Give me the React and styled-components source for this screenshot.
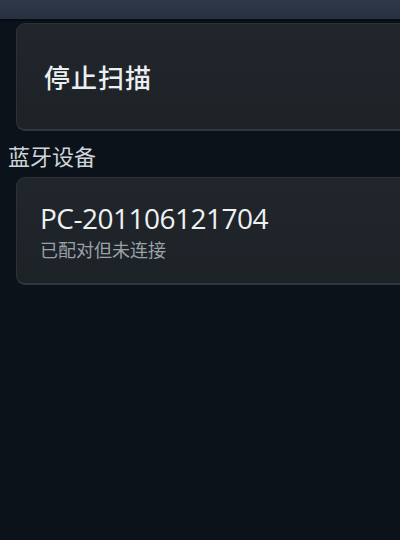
import React from "react"
import styled, { createGlobalStyle } from "styled-components"

const GlobalStyle = createGlobalStyle`
  html, body {
    margin: 0;
    padding: 0;
    background: #0c121a;
    overflow: hidden;
  }
  body {
    font-family: "Open Sans", "Noto Sans CJK SC", sans-serif;
  }
`

const Screen = styled.div`
  width: 400px;
  height: 540px;
  background: #0c121a;
  overflow: hidden;
  display: flex;
  flex-direction: column;
`

const TitleBar = styled.div`
  height: 19px;
  flex-shrink: 0;
  background: linear-gradient(#2d384a, #27313f);
  border-bottom: 2px solid #080c12;
`

const Content = styled.div`
  display: flex;
  flex-direction: column;
  padding-top: 2px;
`

const Card = styled.div`
  height: ${(p) => p.h}px;
  margin-left: 16px;
  margin-right: -20px;
  box-sizing: border-box;
  background: linear-gradient(#20262b, #1d2227);
  border: 1px solid #2c3238;
  border-bottom: 2px solid #30373e;
  border-radius: 9px;
  display: flex;
  flex-direction: column;
  justify-content: center;
  padding-left: ${(p) => p.pl}px;
  color: #eef1f2;
`

const ButtonLabel = styled.span`
  font-family: "Noto Sans CJK SC", sans-serif;
  font-size: 26px;
  font-weight: 500;
  line-height: 30px;
  letter-spacing: 1px;
  color: #eceff1;
  margin-top: 1px;
`

const SectionTitle = styled.div`
  font-family: "Noto Sans CJK SC", sans-serif;
  font-size: 22px;
  line-height: 26px;
  color: #cfd5d9;
  padding: 11px 0 9px 8px;
`

const DeviceName = styled.div`
  font-family: "Open Sans", "Noto Sans CJK SC", sans-serif;
  font-size: 28px;
  line-height: 34px;
  color: #eef1f2;
  letter-spacing: -0.5px;
`

const DeviceState = styled.div`
  font-family: "Noto Sans CJK SC", sans-serif;
  font-size: 18px;
  line-height: 22px;
  color: #9aa2a8;
  margin-top: 3px;
`

export default function App() {
  return (
    <Screen>
      <GlobalStyle />
      <TitleBar />
      <Content>
        <Card h={108} pl={27}>
          <ButtonLabel>停止扫描</ButtonLabel>
        </Card>
        <SectionTitle>蓝牙设备</SectionTitle>
        <Card h={108} pl={23}>
          <DeviceName>PC-201106121704</DeviceName>
          <DeviceState>已配对但未连接</DeviceState>
        </Card>
      </Content>
    </Screen>
  )
}
